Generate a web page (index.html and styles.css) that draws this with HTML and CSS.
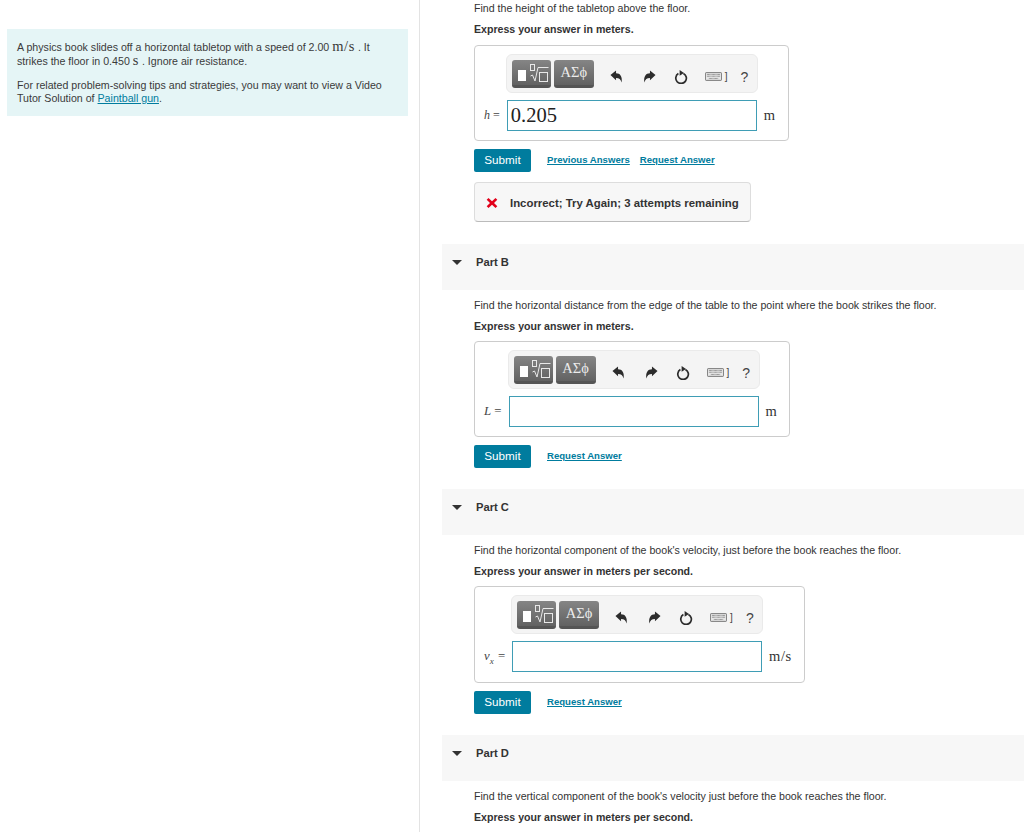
FILE: index.html
```html
<!DOCTYPE html>
<html>
  <head>
    <title>Physics book problem</title>
    <meta name="viewport" content="width=device-width, initial-scale=1">
    <link rel="stylesheet" href="styles.css">
  </head>
  <body>
    <svg class="sprite" width="0" height="0">
      <symbol id="icon-undo" viewBox="0 0 14 14">
        <path d="M.5 5.5 L6.5 .5 V3.5 C11 3.5 13.5 7 12.5 13.5 C11.5 10 10 8.5 6.5 8.5 V11 Z"/>
      </symbol>
      <symbol id="icon-redo" viewBox="0 0 14 14">
        <path d="M13.5 5.5 L7.5 .5 V3.5 C3 3.5 .5 7 1.5 13.5 C2.5 10 4 8.5 7.5 8.5 V11 Z"/>
      </symbol>
      <symbol id="icon-reset" viewBox="0 0 14 14">
        <path class="ring" d="M4.4 3.6 A5.3 5.3 0 1 0 9.4 3.4"/>
        <path d="M5.6 0 L10 3 L5.6 5.8 Z"/>
      </symbol>
      <symbol id="icon-keyboard" viewBox="0 0 22 11">
        <rect x="0.5" y="0.5" width="21" height="10" rx="1" fill="#e6e6e6" stroke="#555"/>
        <path class="keys" d="M2.5 3H19.5M2.5 5.2H19.5"/>
        <path class="keys" d="M5 8H17"/>
      </symbol>
      <symbol id="icon-template" viewBox="0 0 39 25">
        <rect x="6" y="10" width="8" height="11" fill="#fff"/>
        <rect x="18.5" y="4.5" width="4" height="6" fill="none" stroke="#e8e8e8"/>
        <path d="M18.5 16 L20.5 15 L23 21 L26 7.5 H36.5" fill="none" stroke="#e8e8e8"/>
        <rect x="27.5" y="12.5" width="8" height="9" fill="none" stroke="#e8e8e8"/>
      </symbol>
    </svg>

    <aside class="side">
      <div class="intro">
        <p>A physics book slides off a horizontal tabletop with a speed of 2.00 <span class="unit">m/s</span> . It strikes the floor in 0.450 <span class="unit">s</span> . Ignore air resistance.</p>
        <p>For related problem-solving tips and strategies, you may want to view a Video Tutor Solution of <a href="#">Paintball gun</a>.</p>
      </div>
    </aside>

    <main class="parts">
      <section class="part-body first">
        <p class="question">Find the height of the tabletop above the floor.</p>
        <p class="express">Express your answer in meters.</p>
        <div class="answer-box">
          <div class="toolbar">
            <span class="tool-btn tpl"><svg width="39" height="25"><use href="#icon-template"/></svg></span>
            <span class="tool-btn sym">ΑΣϕ</span>
            <svg class="ico undo" width="13" height="13"><use href="#icon-undo"/></svg>
            <svg class="ico redo" width="13" height="13"><use href="#icon-redo"/></svg>
            <svg class="ico reset" width="14" height="14"><use href="#icon-reset"/></svg>
            <svg class="ico kbd" width="17" height="9"><use href="#icon-keyboard"/></svg>
            <span class="bracket">]</span>
            <span class="help">?</span>
          </div>
          <label class="var small"><i>h</i> =</label>
          <div class="input filled">0.205</div>
          <span class="unit-label">m</span>
        </div>
        <div class="actions">
          <button class="submit">Submit</button>
          <a class="action-link" href="#">Previous Answers</a>
          <a class="action-link" href="#">Request Answer</a>
        </div>
        <div class="feedback">
          <svg width="12" height="12" viewBox="0 0 12 12"><path d="M2.5 1 L6 4.2 L9.5 1 L11.3 2.8 L8 6 L11.3 9.2 L9.5 11 L6 7.8 L2.5 11 L.7 9.2 L4 6 L.7 2.8 Z"/></svg>
          <span>Incorrect; Try Again; 3 attempts remaining</span>
        </div>
      </section>

      <h3 class="part-head"><span class="caret"></span>Part B</h3>
      <section class="part-body">
        <p class="question">Find the horizontal distance from the edge of the table to the point where the book strikes the floor.</p>
        <p class="express">Express your answer in meters.</p>
        <div class="answer-box">
          <div class="toolbar">
            <span class="tool-btn tpl"><svg width="39" height="25"><use href="#icon-template"/></svg></span>
            <span class="tool-btn sym">ΑΣϕ</span>
            <svg class="ico undo" width="13" height="13"><use href="#icon-undo"/></svg>
            <svg class="ico redo" width="13" height="13"><use href="#icon-redo"/></svg>
            <svg class="ico reset" width="14" height="14"><use href="#icon-reset"/></svg>
            <svg class="ico kbd" width="17" height="9"><use href="#icon-keyboard"/></svg>
            <span class="bracket">]</span>
            <span class="help">?</span>
          </div>
          <label class="var"><i>L</i> =</label>
          <div class="input"></div>
          <span class="unit-label">m</span>
        </div>
        <div class="actions">
          <button class="submit">Submit</button>
          <a class="action-link" href="#">Request Answer</a>
        </div>
      </section>

      <h3 class="part-head"><span class="caret"></span>Part C</h3>
      <section class="part-body">
        <p class="question">Find the horizontal component of the book's velocity, just before the book reaches the floor.</p>
        <p class="express">Express your answer in meters per second.</p>
        <div class="answer-box tall">
          <div class="toolbar">
            <span class="tool-btn tpl"><svg width="39" height="25"><use href="#icon-template"/></svg></span>
            <span class="tool-btn sym">ΑΣϕ</span>
            <svg class="ico undo" width="13" height="13"><use href="#icon-undo"/></svg>
            <svg class="ico redo" width="13" height="13"><use href="#icon-redo"/></svg>
            <svg class="ico reset" width="14" height="14"><use href="#icon-reset"/></svg>
            <svg class="ico kbd" width="17" height="9"><use href="#icon-keyboard"/></svg>
            <span class="bracket">]</span>
            <span class="help">?</span>
          </div>
          <label class="var"><i>v<sub>x</sub></i> =</label>
          <div class="input"></div>
          <span class="unit-label">m/s</span>
        </div>
        <div class="actions">
          <button class="submit">Submit</button>
          <a class="action-link" href="#">Request Answer</a>
        </div>
      </section>

      <h3 class="part-head"><span class="caret"></span>Part D</h3>
      <section class="part-body">
        <p class="question">Find the vertical component of the book's velocity just before the book reaches the floor.</p>
        <p class="express">Express your answer in meters per second.</p>
      </section>
    </main>
  </body>
</html>
```

FILE: styles.css
```css
html, body {
    height: 832px;
    overflow: hidden;
}

body {
    margin: 0;
    display: flex;
    font-family: "Liberation Sans", Arial, sans-serif;
    font-size: 11px;
    color: #333;
    background: #fff;
}

.sprite {
    position: absolute;
}

.side {
    width: 420px;
    flex: none;
    box-sizing: border-box;
    border-right: 1px solid #e3e3e3;
    padding: 29px 11px 0 7px;
}

.intro {
    background: #e5f5f6;
    padding: 12px 10px 11px 10px;
    height: 87px;
    box-sizing: border-box;
    font-size: 10.63px;
    line-height: 13.5px;
    color: #3a3a3a;
}

.intro p {
    margin: 0 0 10.7px;
}

.intro a {
    color: #007c9e;
}

.unit {
    font-family: "Liberation Serif", serif;
    font-size: 14.5px;
    line-height: 0;
    letter-spacing: .6px;
}

.parts {
    flex: 1;
    padding-left: 22px;
    min-width: 0;
}

.part-body {
    padding: 8px 0 0 32px;
}

.part-body.first {
    padding-top: 1px;
}

.question {
    margin: 0;
    line-height: 14px;
    font-size: 10.63px;
}

.express {
    margin: 7px 0 0;
    line-height: 14px;
    font-size: 10.6px;
    font-weight: bold;
}

.answer-box {
    display: grid;
    grid-template-columns: auto 250px auto;
    column-gap: 7px;
    row-gap: 7px;
    align-items: center;
    width: fit-content;
    margin-top: 8px;
    padding: 8px 12px 9px 9px;
    border: 1px solid #ccc;
    border-radius: 4px;
}

.first .answer-box {
    margin-top: 9px;
}

.answer-box.tall {
    padding-bottom: 10px;
}

.toolbar {
    grid-column: 2 / 4;
    justify-self: start;
    display: flex;
    align-items: center;
    box-sizing: border-box;
    width: 252px;
    height: 39px;
    margin-left: -1px;
    padding-left: 5px;
    background: #f4f4f4;
    border: 1px solid #eaeaea;
    border-radius: 6px;
}

.tool-btn {
    display: flex;
    align-items: center;
    justify-content: center;
    box-sizing: border-box;
    height: 28px;
    border-bottom: 3px solid #555;
    border-radius: 3px;
    background: linear-gradient(#858585, #626262);
    color: #ececec;
}

.tpl {
    width: 39px;
    margin-right: 3px;
}

.sym {
    width: 40px;
    font-family: "Liberation Serif", serif;
    font-size: 14.5px;
}

.ico {
    flex: none;
    margin-top: 6px;
    fill: #2c2c2c;
}

.ring {
    fill: none;
    stroke: #2c2c2c;
    stroke-width: 1.7;
}

.keys {
    fill: none;
    stroke: #777;
    stroke-width: 1.2;
    stroke-dasharray: 1 .6;
}

.undo {
    margin-left: 16px;
}

.redo {
    margin-left: 20px;
}

.reset {
    margin-left: 18px;
}

.kbd {
    margin-left: 17px;
}

.bracket {
    margin-top: 6px;
    margin-left: 3px;
    font-size: 10px;
    color: #444;
}

.help {
    margin-top: 6px;
    margin-left: 13px;
    font-size: 14px;
    color: #444;
}

.var {
    font-family: "Liberation Serif", serif;
    font-size: 12.8px;
    color: #444;
    white-space: nowrap;
}

.var.small {
    font-size: 12px;
}

.var sub {
    margin-right: 1px;
    font-size: 9px;
    line-height: 0;
}

.input {
    box-sizing: border-box;
    height: 31px;
    border: 1px solid #3f9db5;
    background: #fff;
}

.input.filled {
    padding-left: 3px;
    font-family: "Liberation Serif", serif;
    font-size: 20.5px;
    line-height: 28px;
    color: #222;
}

.unit-label {
    font-family: "Liberation Serif", serif;
    font-size: 14.5px;
    letter-spacing: .6px;
    color: #333;
}

.actions {
    display: flex;
    align-items: center;
    margin-top: 8px;
}

.submit {
    width: 57px;
    height: 23px;
    padding: 0 0 2px;
    margin-right: 16px;
    border: none;
    border-radius: 2px;
    background: #007c9e;
    color: #fff;
    font-family: "Liberation Sans", Arial, sans-serif;
    font-size: 11.7px;
}

.action-link {
    margin: 0 10px 2px 0;
    color: #007c9e;
    font-size: 9.6px;
    font-weight: bold;
}

.feedback {
    display: flex;
    align-items: center;
    gap: 12px;
    width: fit-content;
    box-sizing: border-box;
    height: 40px;
    margin: 10px 0 22px;
    padding: 2px 11px 0;
    background: #f7f7f7;
    border: 1px solid #ddd;
    border-bottom-color: #bbb;
    border-radius: 4px;
    font-size: 11.4px;
    font-weight: bold;
}

.feedback svg {
    fill: #e2001a;
}

.part-head {
    display: flex;
    align-items: center;
    box-sizing: border-box;
    height: 46px;
    margin: 21px 0 0;
    padding: 0 0 10px 10px;
    background: #f7f7f7;
    font-size: 11.2px;
    font-weight: bold;
}

.first + .part-head {
    margin-top: 0;
}

.caret {
    width: 0;
    height: 0;
    margin-right: 14px;
    border-left: 5px solid transparent;
    border-right: 5px solid transparent;
    border-top: 5px solid #333;
}
```
